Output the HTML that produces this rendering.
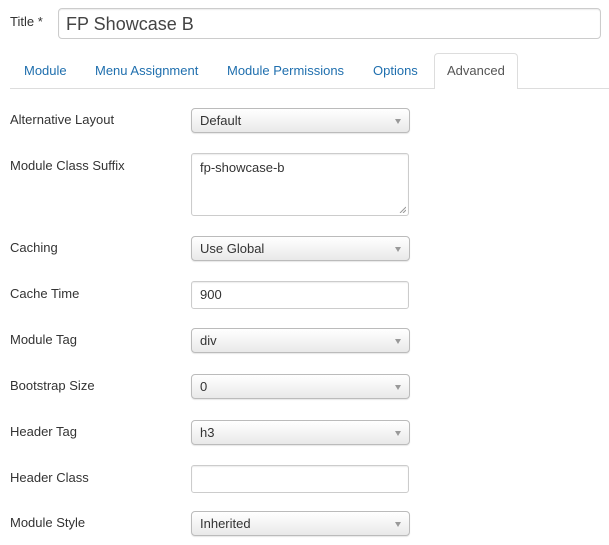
<!DOCTYPE html>
<html><head><style>
body{margin:0;width:609px;height:545px;background:#fff;font-family:"Liberation Sans",sans-serif;font-size:13px;color:#333;position:relative;overflow:hidden}
.a{position:absolute}
.lbl{position:absolute;left:10px;line-height:18px}
.sel{position:absolute;left:191px;width:217px;height:23px;border:1px solid #bbb;border-radius:4px;background:linear-gradient(#fff,#e9e9e9);box-shadow:0 1px 1px rgba(0,0,0,.1);box-sizing:content-box}
.sel span{position:absolute;left:8px;top:3px;line-height:17px}
.sel i{position:absolute;right:8px;top:10px;width:0;height:0;border-left:3.5px solid transparent;border-right:3.5px solid transparent;border-top:5px solid #999}
.inp{position:absolute;left:191px;width:218px;border:1px solid #ccc;border-radius:3px;box-shadow:inset 0 1px 1px rgba(0,0,0,.075);box-sizing:border-box}
.tab{position:absolute;top:62px;color:#1f6fae;line-height:18px}
</style></head><body>
<div class="lbl" style="top:13px">Title *</div>
<div class="a" style="left:58px;top:8px;width:543px;height:31px;border:1px solid #ccc;border-radius:4px;box-sizing:border-box;box-shadow:inset 0 1px 1px rgba(0,0,0,.075)"><span class="a" style="left:7px;top:3px;font-size:18px;line-height:24px;color:#444">FP Showcase B</span></div>
<div class="a" style="left:10px;top:88px;width:599px;height:1px;background:#ddd"></div>
<div class="a" style="left:434px;top:53px;width:84px;height:36px;border:1px solid #ddd;border-bottom:none;border-radius:4px 4px 0 0;background:#fff;box-sizing:border-box"></div>
<div class="tab" style="left:24px">Module</div>
<div class="tab" style="left:95px">Menu Assignment</div>
<div class="tab" style="left:227px">Module Permissions</div>
<div class="tab" style="left:373px">Options</div>
<div class="tab" style="left:447px;color:#555">Advanced</div>

<div class="lbl" style="top:111px">Alternative Layout</div>
<div class="sel" style="top:108px"><span>Default</span><i></i></div>

<div class="lbl" style="top:157px">Module Class Suffix</div>
<div class="inp" style="top:153px;height:63px"><span class="a" style="left:8px;top:6px">fp-showcase-b</span>
<svg class="a" style="right:2px;bottom:2px" width="7" height="7"><path d="M1 7L7 1M4 7L7 4" stroke="#999" stroke-width="1"/></svg></div>

<div class="lbl" style="top:239px">Caching</div>
<div class="sel" style="top:236px"><span>Use Global</span><i></i></div>

<div class="lbl" style="top:285px">Cache Time</div>
<div class="inp" style="top:281px;height:28px"><span class="a" style="left:8px;top:5px">900</span></div>

<div class="lbl" style="top:331px">Module Tag</div>
<div class="sel" style="top:328px"><span>div</span><i></i></div>

<div class="lbl" style="top:377px">Bootstrap Size</div>
<div class="sel" style="top:374px"><span>0</span><i></i></div>

<div class="lbl" style="top:423px">Header Tag</div>
<div class="sel" style="top:420px"><span>h3</span><i></i></div>

<div class="lbl" style="top:469px">Header Class</div>
<div class="inp" style="top:465px;height:28px"></div>

<div class="lbl" style="top:514px">Module Style</div>
<div class="sel" style="top:511px"><span>Inherited</span><i></i></div>
</body></html>
